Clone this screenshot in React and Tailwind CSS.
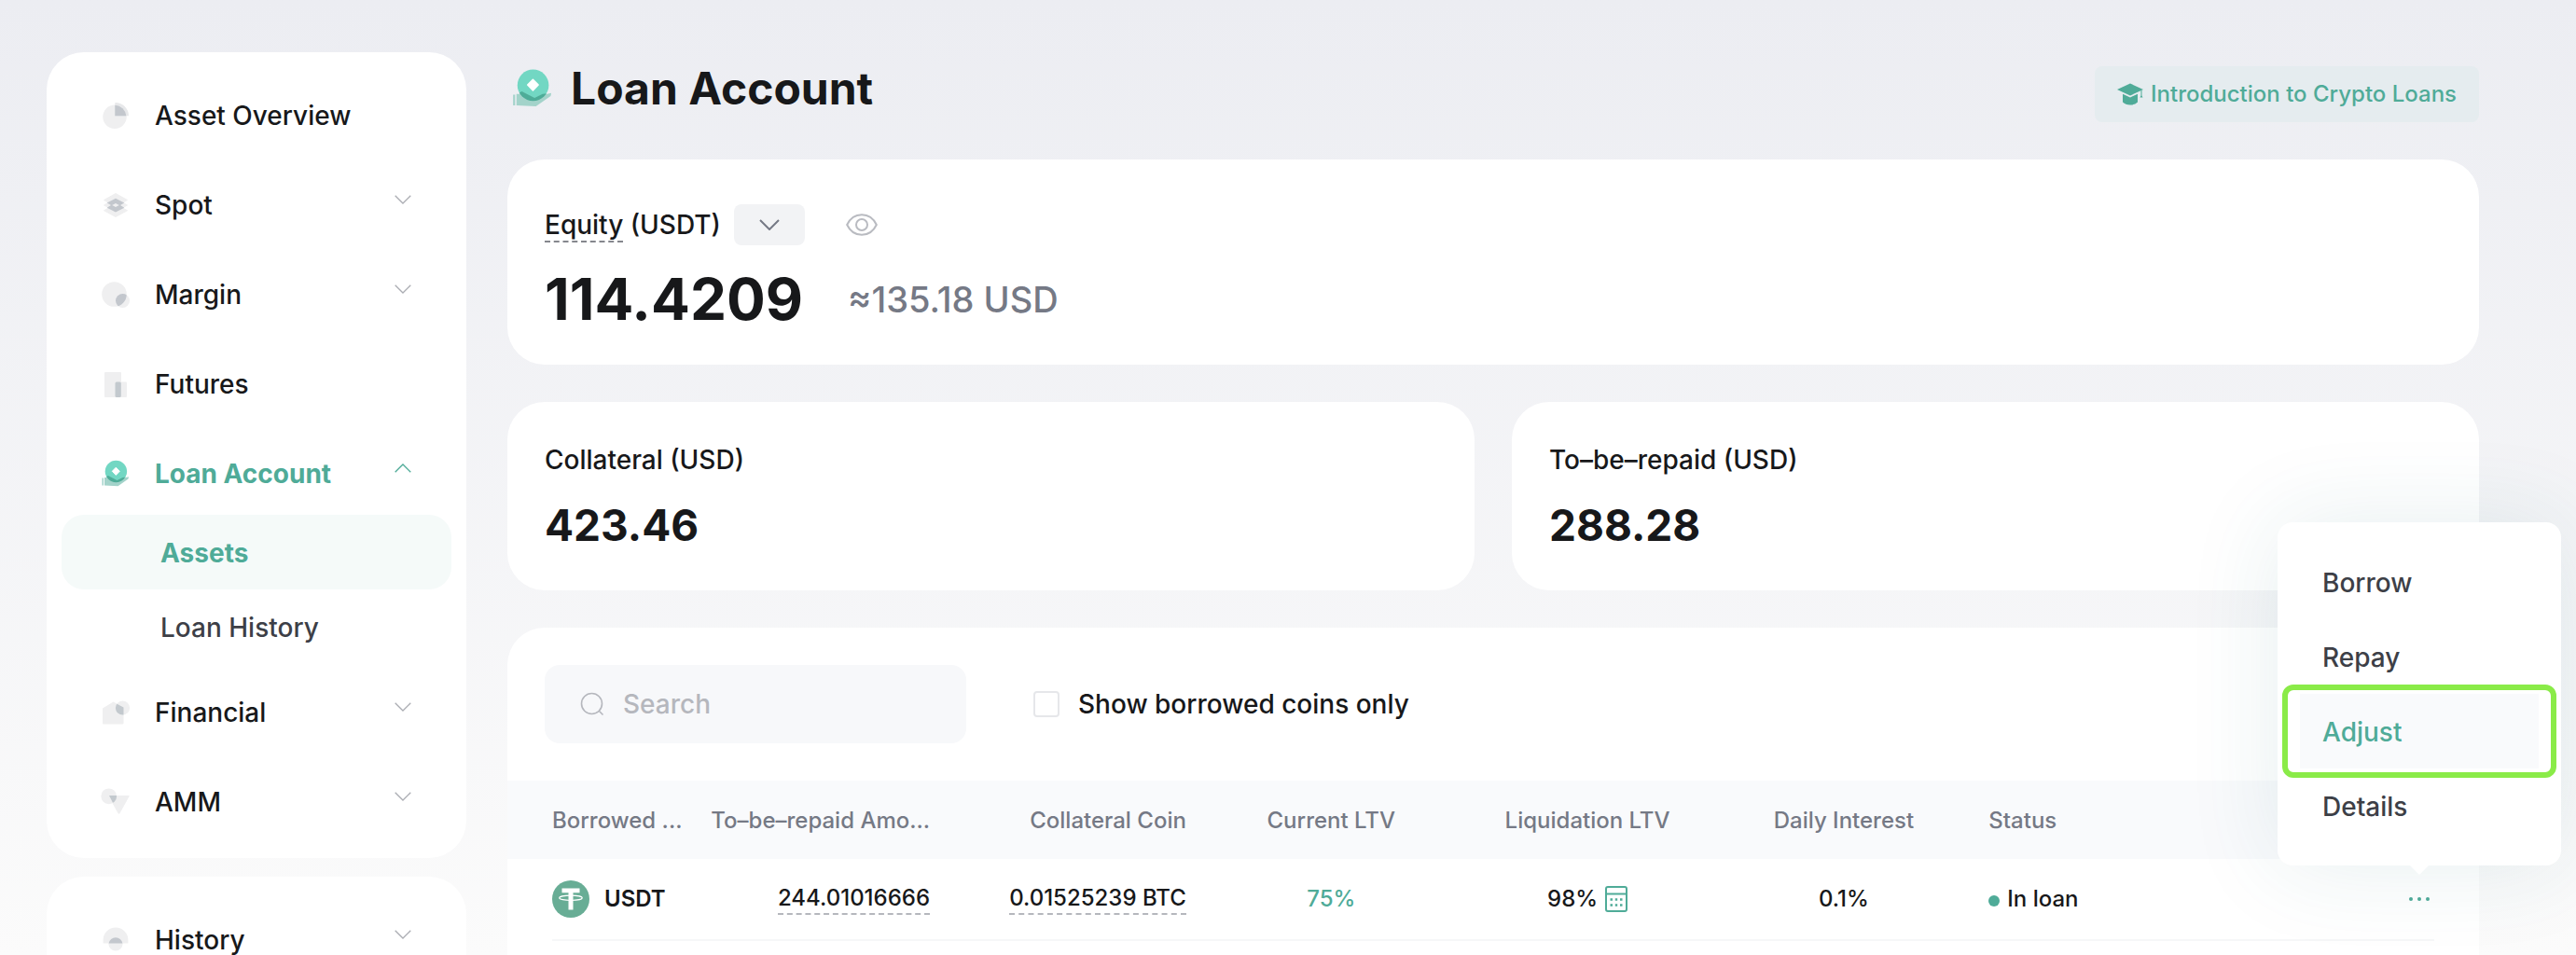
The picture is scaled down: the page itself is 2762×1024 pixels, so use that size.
import React, { useState } from 'react';

const OverviewIcon = () => (
  <svg viewBox="0 0 32 32" className="h-8 w-8 shrink-0">
    <circle cx="15" cy="17.3" r="12.7" fill="#efeff0" />
    <path d="M15.3 2A14.5 14.5 0 0 1 30 16.3H15.3Z" fill="#e7e8ea" />
    <path d="M15.3 4.8A12.6 12.6 0 0 1 27.3 16.3H15.3Z" fill="#c3c7cd" />
  </svg>
);

const SpotIcon = () => (
  <svg viewBox="0 0 32 32" className="h-8 w-8 shrink-0">
    <g fill="#efeff0" stroke="#efeff0" strokeLinejoin="round">
      <path d="M16 3.5 28.5 10.5 16 17.5 3.5 10.5Z" />
      <path d="M16 9 28.5 16 16 23 3.5 16Z" />
      <path d="M16 15 28.5 21.7 16 28.5 3.5 21.7Z" />
    </g>
    <path d="M16 8.7 25.3 13.6 21 16 25.3 18.8 16 23.4 6.7 18.8 11 16 6.7 13.6Z" fill="#c3c7cd" />
    <path d="M16 14 19.8 16 16 18 12.2 16Z" fill="#efeff0" />
  </svg>
);

const MarginIcon = () => (
  <svg viewBox="0 0 32 32" className="h-8 w-8 shrink-0">
    <clipPath id="margin-clip"><circle cx="14.5" cy="15.5" r="13.3" /></clipPath>
    <circle cx="14.5" cy="15.5" r="13.3" fill="#efeff0" />
    <circle cx="23.5" cy="22.5" r="7.5" fill="#efeff0" />
    <circle cx="23.5" cy="22.5" r="7.5" fill="#c3c7cd" clipPath="url(#margin-clip)" />
  </svg>
);

const FuturesIcon = () => (
  <svg viewBox="0 0 32 32" className="h-8 w-8 shrink-0">
    <rect x="4" y="3" width="18" height="27" rx="1" fill="#efeff0" />
    <rect x="15.5" y="13.5" width="12.5" height="16.5" rx="1" fill="#efeff0" />
    <rect x="15.5" y="13.5" width="6.3" height="16.5" rx="1.5" fill="#c3c9ce" />
  </svg>
);

const LoanIcon = ({ className }) => (
  <svg viewBox="0 0 32 32" className={className}>
    <clipPath id="coin-clip"><circle cx="16.4" cy="13.5" r="11.7" /></clipPath>
    <circle cx="16.4" cy="13.5" r="11.7" fill="#72d7c3" />
    <path d="M1.5 20.5H3V28.5H1.5ZM4 20H8L9.5 19 17.5 23.5 22 21 30 19.3 29.5 21.5 18.5 29.3 4 28.5Z" fill="#a3d3ca" />
    <path d="M4 20 8 18 17.5 23 23.5 20 30 19.3 29.5 21.5 18.5 29.3 4 28.5Z" fill="#4eac98" clipPath="url(#coin-clip)" />
    <path d="M16.3 9.2 20.3 13.3 16.3 17.4 12.3 13.3Z" fill="#fff" stroke="#fff" strokeLinejoin="round" />
  </svg>
);

const FinancialIcon = () => (
  <svg viewBox="0 0 32 32" className="h-8 w-8 shrink-0">
    <clipPath id="house-clip"><path d="M2 11 13 4.5 24.5 10.5V28H2Z" /></clipPath>
    <path d="M2 11.5 13.5 4.5 24.5 10.5V27.5Q24.5 28.5 23.5 28.5H3Q2 28.5 2 27.5Z" fill="#efeff0" />
    <circle cx="23.5" cy="11" r="7.6" fill="#efeff0" />
    <circle cx="23.5" cy="11" r="7.6" fill="#c3c9ce" clipPath="url(#house-clip)" />
  </svg>
);

const AmmIcon = () => (
  <svg viewBox="0 0 32 32" className="h-8 w-8 shrink-0">
    <clipPath id="amm-clip"><circle cx="8.7" cy="9.8" r="8.4" /></clipPath>
    <circle cx="8.7" cy="9.8" r="8.4" fill="#efeff0" />
    <path d="M9 9H30.5Q31 9 30.5 10L20.5 28Q19.5 29.5 18.5 28L8.5 10Q8 9 9 9Z" fill="#efeff0" />
    <path d="M9 9H30.5L19.5 29.5Z" fill="#c3c9ce" clipPath="url(#amm-clip)" />
  </svg>
);

const HistoryIcon = () => (
  <svg viewBox="0 0 32 32" className="h-8 w-8 shrink-0">
    <path d="M2.6 19.5V16A13.4 13.4 0 0 1 29.4 16V19.5Z" fill="#efeff0" />
    <circle cx="16" cy="20" r="7.6" fill="#efeff0" />
    <path d="M8.6 19.5A7.5 7.5 0 0 1 23.4 19.5Z" fill="#c3c7cd" />
  </svg>
);

const Chevron = ({ open }) => (
  <svg viewBox="0 0 18 10" className="mb-3 h-[10px] w-[18px] shrink-0" fill="none" strokeWidth="1.3">
    {open ? <path d="M.7 9.2 9 1 17.3 9.2" stroke="#4fab98" /> : <path d="M.7.8 9 9 17.3.8" stroke="#abadb3" />}
  </svg>
);

const GraduationIcon = () => (
  <svg viewBox="0 0 28 24" className="h-6 w-7 shrink-0" fill="#4fab98">
    <path d="M14 .5 28 7 14 13.5 0 7Z" />
    <path d="M6 11.7 14 15.4 22 11.7V20.5Q19 23.5 14 23.5T6 20.5Z" />
    <path d="M25.5 8H26.5V13.5L27.5 15.5H24.5L25.5 13.5Z" />
  </svg>
);

const EyeIcon = () => (
  <svg viewBox="0 0 34 24" className="h-6 w-[34px]" fill="none" stroke="#b9bbc1" strokeWidth="2">
    <path d="M1.2 12C4.5 5 10.5 1.2 17 1.2S29.5 5 32.8 12C29.5 19 23.5 22.8 17 22.8S4.5 19 1.2 12Z" />
    <circle cx="17" cy="12" r="6" />
  </svg>
);

const SearchIcon = () => (
  <svg viewBox="0 0 26 26" className="h-[26px] w-[26px] shrink-0" fill="none" stroke="#b5b7bd" strokeWidth="1.6">
    <circle cx="12.5" cy="12.5" r="11" />
    <path d="M20 20 24.5 24.5" />
  </svg>
);

const TetherIcon = () => (
  <svg viewBox="0 0 40 40" className="h-10 w-10 shrink-0">
    <circle cx="20" cy="20" r="20" fill="#68ad95" />
    <path d="M10.5 8.5H29.5V13.3H22.5V31.5H17.5V13.3H10.5Z" fill="#fff" />
    <ellipse cx="20" cy="18.8" rx="12.3" ry="2.7" fill="none" stroke="#fff" strokeWidth="1.2" />
  </svg>
);

const CalculatorIcon = () => (
  <svg viewBox="0 0 24 28" className="h-7 w-6" fill="none" stroke="#4fab98" strokeWidth="2">
    <rect x="1" y="1" width="22" height="26" rx="2" />
    <path d="M1 8.5H23" />
    <path d="M5.5 14.5H8M10.8 14.5H13.2M16 14.5H18.5M5.5 20.5H8M10.8 20.5H13.2M16 20.5H18.5" strokeWidth="2.6" />
  </svg>
);

const assetMenu = [
  { label: 'Asset Overview', icon: <OverviewIcon /> },
  { label: 'Spot', icon: <SpotIcon />, expandable: true },
  { label: 'Margin', icon: <MarginIcon />, expandable: true },
  { label: 'Futures', icon: <FuturesIcon /> },
  { label: 'Loan Account', icon: <LoanIcon className="h-8 w-8 shrink-0" />, expandable: true, active: true, children: ['Assets', 'Loan History'] },
  { label: 'Financial', icon: <FinancialIcon />, expandable: true },
  { label: 'AMM', icon: <AmmIcon />, expandable: true },
];

const historyMenu = [{ label: 'History', icon: <HistoryIcon />, expandable: true }];

const SideMenu = ({ items }) => (
  <ul className="rounded-[40px] bg-white pt-5 pb-3">
    {items.map(item => (
      <li key={item.label}>
        <button type="button" className={`flex h-24 w-full items-center pr-[59px] pl-[58px] text-left ${item.active ? 'font-bold text-[#4fab98]' : ''}`}>
          {item.icon}
          <span className="ml-[26px] flex-1">{item.label}</span>
          {item.expandable && <Chevron open={item.active} />}
        </button>
        {item.children && (
          <ul className="-mt-1 mb-1 px-4">
            {item.children.map((child, idx) => (
              <li key={child}>
                <a href="#" className={`flex h-20 items-center rounded-3xl pt-0.5 pl-[106px] ${idx === 0 ? 'bg-[#f5faf9] font-bold text-[#4fab98]' : 'text-[#3d3f47]'}`}>{child}</a>
              </li>
            ))}
          </ul>
        )}
      </li>
    ))}
  </ul>
);

const BalanceCard = ({ label, value }) => (
  <section className="rounded-[40px] bg-white p-10">
    <h2 className="leading-[44px]">{label}</h2>
    <p className="mt-4 pt-0.5 text-[46px] font-bold leading-[60px]">{value}</p>
  </section>
);

const ActionMenu = () => (
  <ul className="absolute bottom-full left-1/2 z-10 mb-5 w-[304px] -translate-x-1/2 rounded-2xl bg-white p-6 text-[28px] text-[#3d3f47] shadow-[0_0_100px_rgba(40,110,115,0.11)]">
    {['Borrow', 'Repay', 'Adjust', 'Details'].map(action => (
      <li key={action} className="relative">
        <button type="button" className={`h-20 w-full pt-1 pl-6 text-left ${action === 'Adjust' ? 'bg-[#f9fafc] text-[#4fab98]' : ''}`}>{action}</button>
        {action === 'Adjust' && <span className="pointer-events-none absolute -inset-x-[19px] -inset-y-[10px] rounded-xl border-[6px] border-[#8aeb48]"></span>}
      </li>
    ))}
    <li aria-hidden="true" className="absolute top-full left-1/2 -translate-x-1/2 border-x-[10px] border-t-[10px] border-x-transparent border-t-white"></li>
  </ul>
);

const LoanTable = () => {
  const cell = 'flex h-[88px] items-center border-b-2 border-[#f6f7f8]';
  return (
    <table className="w-full table-fixed text-2xl">
      <thead className="bg-[#f9fafc] text-[#757985]">
        <tr className="h-[84px] whitespace-nowrap">
          <th className="w-[9%] pt-0.5 pl-12 text-left font-medium">Borrowed ...</th>
          <th className="w-[13%] pt-0.5 pr-3 text-right font-medium">To–be–repaid Amo...</th>
          <th className="w-[13%] pt-0.5 pr-3 text-right font-medium">Collateral Coin</th>
          <th className="w-[13%] pt-0.5 pl-3 text-center font-medium">Current LTV</th>
          <th className="w-[13%] pt-0.5 pl-3 text-center font-medium">Liquidation LTV</th>
          <th className="w-[13%] pt-0.5 pl-3 text-center font-medium">Daily Interest</th>
          <th className="w-[13%] pt-0.5 pl-6 text-left font-medium">Status</th>
          <th aria-label="Actions"></th>
        </tr>
      </thead>
      <tbody>
        <tr className="whitespace-nowrap">
          <td className="pl-12"><div className={`${cell} gap-4 font-semibold`}><TetherIcon />USDT</div></td>
          <td><div className={`${cell} justify-end pr-3`}><span className="border-b-2 border-dashed border-[#b5b7bd]">244.01016666</span></div></td>
          <td><div className={`${cell} justify-end pr-3`}><span className="border-b-2 border-dashed border-[#b5b7bd]">0.01525239 BTC</span></div></td>
          <td><div className={`${cell} justify-center pl-3 text-[#4fab98]`}>75%</div></td>
          <td>
            <div className={`${cell} justify-center gap-2 pl-3`}>
              98%
              <button type="button" aria-label="LTV calculator"><CalculatorIcon /></button>
            </div>
          </td>
          <td><div className={`${cell} justify-center pl-3`}>0.1%</div></td>
          <td><div className={`${cell} gap-2 pl-6`}><span className="mt-1 h-3 w-3 rounded-full bg-[#4fab98]"></span>In loan</div></td>
          <td className="pr-12">
            <div className={`${cell} justify-end`}>
              <div className="relative">
                <button type="button" aria-label="More actions" className="flex h-8 w-8 items-center justify-center gap-[5px]">
                  <span className="h-1 w-1 rounded-full bg-[#4fab98]"></span>
                  <span className="h-1 w-1 rounded-full bg-[#4fab98]"></span>
                  <span className="h-1 w-1 rounded-full bg-[#4fab98]"></span>
                </button>
                <ActionMenu />
              </div>
            </div>
          </td>
        </tr>
      </tbody>
    </table>
  );
};

const App = () => {
  const [borrowedOnly, setBorrowedOnly] = useState(false);

  return (
    <div className="flex h-screen items-start gap-11 overflow-hidden bg-linear-to-b from-[#ecedf2] to-[#fbfbfb] pt-14 pr-[104px] pl-[50px] font-['Inter',sans-serif] text-[28px] font-medium text-[#17181a]">
      <nav className="flex w-[450px] shrink-0 flex-col gap-5">
        <SideMenu items={assetMenu} />
        <SideMenu items={historyMenu} />
      </nav>

      <main className="flex min-w-0 flex-1 flex-col gap-10 pt-[15px]">
        <header className="flex h-[60px] items-start justify-between">
          <h1 className="flex items-center gap-[18px] pl-1 text-5xl font-bold leading-[48px]">
            <LoanIcon className="h-[46px] w-[46px]" />
            Loan Account
          </h1>
          <a href="#" className="flex h-[60px] items-center gap-2 rounded-lg bg-[#e5ecef] px-6 text-2xl text-[#4fab98]">
            <GraduationIcon />
            Introduction to Crypto Loans
          </a>
        </header>

        <section className="h-[220px] rounded-[40px] bg-white px-10 pt-12">
          <div className="flex h-11 items-center">
            <h2><span className="border-b-2 border-dashed border-[#85878d]">Equity</span> (USDT)</h2>
            <button type="button" aria-label="Currency" className="ml-3.5 flex h-11 w-[76px] items-center justify-center rounded-lg bg-[#f2f3f5]">
              <svg viewBox="0 0 22 12" className="h-3 w-[22px]" fill="none" stroke="#757985" strokeWidth="2"><path d="M1 1 11 11 21 1" /></svg>
            </button>
            <button type="button" aria-label="Hide balance" className="ml-11"><EyeIcon /></button>
          </div>
          <p className="mt-3.5 flex items-center gap-12 leading-[88px]">
            <strong className="text-[62px] font-bold">114.4209</strong>
            <span className="text-[38px] text-[#757985]">≈135.18 USD</span>
          </p>
        </section>

        <div className="grid grid-cols-2 gap-10">
          <BalanceCard label="Collateral (USD)" value="423.46" />
          <BalanceCard label="To–be–repaid (USD)" value="288.28" />
        </div>

        <section className="h-[480px] rounded-[40px] bg-white">
          <div className="flex items-center p-10">
            <label className="flex h-[84px] w-[452px] items-center gap-5 rounded-2xl bg-[#f7f8fa] px-[38px]">
              <SearchIcon />
              <input type="text" placeholder="Search" aria-label="Search" className="min-w-0 flex-1 bg-transparent outline-none placeholder:text-[#b5b7bd]" />
            </label>
            <label className="ml-18 flex items-center gap-5">
              <input type="checkbox" checked={borrowedOnly} onChange={e => setBorrowedOnly(e.target.checked)} className="h-7 w-7 appearance-none rounded-sm border-2 border-[#e6e7ea] bg-white checked:bg-[#4fab98]" />
              Show borrowed coins only
            </label>
          </div>
          <LoanTable />
        </section>
      </main>
    </div>
  );
};

export default App;
